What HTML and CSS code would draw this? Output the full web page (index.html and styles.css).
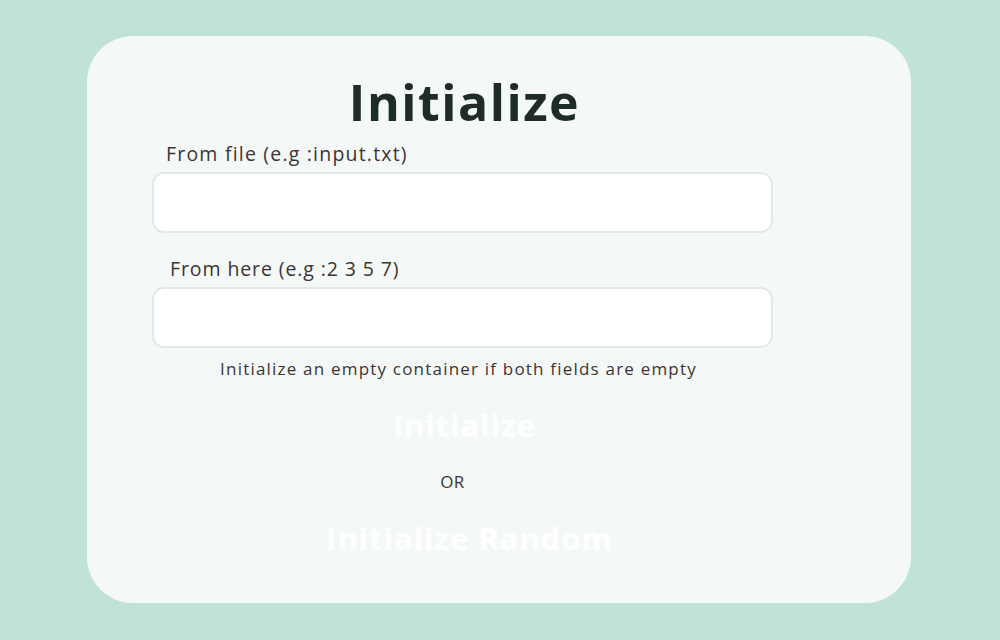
FILE: index.html
```html
<!DOCTYPE html>
<html>
<head>
<meta charset="utf-8">
<link rel="stylesheet" href="styles.css">
</head>
<body>
<div class="card">
  <div class="content">
    <h1 class="title">Initialize</h1>
    <label class="label label-file">From file (e.g :input.txt)</label>
    <input class="field" type="text">
    <label class="label label-here">From here (e.g :2 3 5 7)</label>
    <input class="field" type="text">
    <p class="hint">Initialize an empty container if both fields are empty</p>
    <button class="btn btn-init">Initialize</button>
    <p class="or">OR</p>
    <button class="btn btn-random">Initialize Random</button>
  </div>
</div>
</body>
</html>
```
FILE: styles.css
```css
html, body {
  margin: 0;
  padding: 0;
  background: #c1e3d7;
  font-family: "Open Sans", "Noto Sans", sans-serif;
}
.card {
  width: 824px;
  height: 567px;
  margin: 36px 0 0 87px;
  background: #f4f9f7;
  border-radius: 46px;
  box-sizing: border-box;
  padding: 0 0 0 65px;
}
.content {
  width: 621px;
  display: flex;
  flex-direction: column;
  align-items: stretch;
  text-align: center;
}
.title {
  margin: 36px 0 0;
  font-size: 50px;
  line-height: 60px;
  font-weight: 700;
  color: #1f2b27;
  letter-spacing: 1.5px;
  padding-left: 4px;
}
.label {
  text-align: left;
  font-size: 19.5px;
  line-height: 24px;
  letter-spacing: 1.2px;
  color: #3d3434;
  margin-bottom: 6px;
}
.label-file { padding-left: 14px; margin-top: 10px; }
.label-here { padding-left: 18px; margin-top: 24px; letter-spacing: 0.9px; }
.field {
  height: 61px;
  box-sizing: border-box;
  border: 2px solid #e6e8e7;
  border-radius: 12px;
  background: #ffffff;
  outline: none;
}
.hint {
  margin: 9.5px 0 0;
  font-size: 17px;
  line-height: 22px;
  color: #3d3434;
  letter-spacing: 1.2px;
  padding-right: 8px;
}
.btn {
  align-self: center;
  background: transparent;
  border: none;
  color: #ffffff;
  font-family: inherit;
  font-weight: 700;
  font-size: 31px;
  letter-spacing: 0.9px;
  padding: 0;
  line-height: 36px;
}
.btn-init { margin-top: 27.5px; padding-left: 4px; }
.or {
  margin: 27.5px 0 0;
  font-size: 17px;
  line-height: 22px;
  color: #3d3434;
  letter-spacing: 0.5px;
  padding-right: 20px;
}
.btn-random { margin-top: 27.5px; padding-left: 14px; }
```
